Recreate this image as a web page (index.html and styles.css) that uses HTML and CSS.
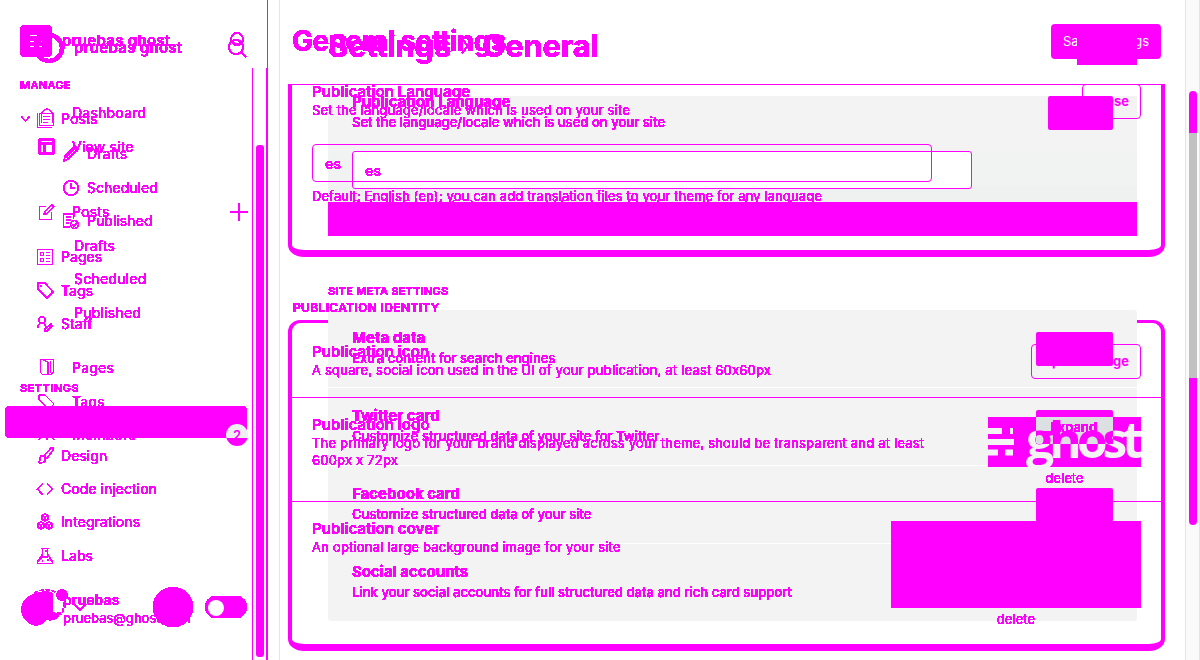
FILE: index.html
```
<!DOCTYPE html>
<html lang="en">
<head>
<meta charset="utf-8">
<title>General settings</title>
<link rel="stylesheet" href="styles.css">
</head>
<body>
<svg class="defs" width="0" height="0"><filter id="hard" x="0" y="0" width="100%" height="100%" color-interpolation-filters="sRGB"><feComponentTransfer><feFuncA type="discrete" tableValues="0 1 1 1 1 1 1 1 1"/></feComponentTransfer></filter></svg>
<div class="app">
 <aside class="sidebar stack">
  <!-- sidebar, grouped navigation -->
  <div class="ink side-a">
   <div class="brand"><span class="brand-icon"><svg width="32" height="32" viewBox="0 0 32 32"><path d="M10 10.500h7M10 16.500h4M19 16.500h3M10 21.500h7M19 21.500h3"/></svg></span><b>pruebas ghost</b><svg class="brand-search" width="20" height="20" viewBox="0 0 20 20"><circle cx="10" cy="8" r="6"/><path d="M5 11q5 4 10 0"/></svg></div>
   <div class="group manage">MANAGE</div>
   <div class="row"><svg class="chev" width="12" height="8" viewBox="0 0 12 8"><path d="M1.500 1.500 5.500 6 9.500 1.500"/></svg><svg class="ic thin" width="20" height="24" viewBox="0 0 20 24"><path d="M1.500 6v14.500h14M3.500 6.500h14v12h-14zM5.500 5v11M16.500 5v11M5.500 5.500l5.500-4 5.500 4M7 9.500h7M7 12.500h7M7 15.500h5"/></svg>Posts</div>
   <div class="row sub first"><svg class="ic" width="20" height="20" viewBox="0 0 20 20"><path d="m2 17 1-5L13 2l3 3L6 15zM4 13 13 4M4 12l3 3"/></svg>Drafts</div>
   <div class="row sub"><svg class="ic" width="20" height="20" viewBox="0 0 20 20"><circle cx="9" cy="10" r="7.300"/><path d="M9 5v5h4"/></svg>Scheduled</div>
   <div class="row sub"><svg class="ic" width="20" height="20" viewBox="0 0 20 20"><path d="M8 16H1.500V3h10v5M4 6h5M4 9h5M4 12h3"/><circle cx="12.500" cy="13.500" r="4"/><path d="m10.500 13.500 1.500 1.500 3-3"/></svg>Published</div>
   <div class="row gap"><svg class="ic thin" width="20" height="20" viewBox="0 0 20 20"><path d="M1.500 2.500h15v15h-15zM4.500 5.500h3v3h-3zM4.500 11.500h3v3h-3zM10 5.500h4M10 8.500h4M10 11.500h4M10 14.500h4"/></svg>Pages</div>
   <div class="row"><svg class="ic" width="20" height="20" viewBox="0 0 20 20"><path d="M2 2h7l8 9-6 6-9-9z"/><circle cx="5" cy="5" r=".5"/></svg>Tags</div>
   <div class="row staff"><svg class="ic" width="20" height="20" viewBox="0 0 20 20"><circle cx="6" cy="6" r="3.200"/><path d="M1.500 14q1-5 4.500-5 3 0 4 4M9 15l6-5 1 2-5 5H9z"/></svg>Staff</div>
   <div class="group settings">SETTINGS</div>
   <div class="active"></div>
   <div class="row low design"><svg class="ic" width="20" height="20" viewBox="0 0 20 20"><path d="M8 10 15 2h2v2l-6 8zM8 10q-4-1-4 3 0 3-2 3 5 2 7-1 1-2-1-5z"/></svg>Design</div>
   <div class="row low"><svg class="ic code" width="20" height="20" viewBox="0 0 20 20"><path d="m6.500 5-5 5 5 5M11.500 5l5 5-5 5"/></svg>Code injection</div>
   <div class="row low"><svg class="ic" width="20" height="20" viewBox="0 0 20 20"><path d="m9 2 3 1.500v4L9 9 6 7.500v-4zM5 10l3 1.500v4L5 17l-3-1.500v-4zM13 10l3 1.500v4L13 17l-3-1.500v-4zM6 4l3 1 3-1M9 5v3M2 12l3 1 3-1M5 13v4M10 12l3 1 3-1M13 13v4"/></svg>Integrations</div>
   <div class="row low"><svg class="ic" width="20" height="20" viewBox="0 0 20 20"><path d="M5 2.500h8M6.500 3v5L1.500 16v1.500h15V16l-5-8V3M9 5h2M4 13l2-2h6M6 15h1M11 14h2"/></svg>Labs</div>
   <div class="user">
    <svg class="avatar" width="50" height="44" viewBox="0 0 50 44"><path class="solid" d="M18 7c8-3 15-2 16 0v19q4 1 8 0-5 9-14 6-4 6-10 6A16 16 0 0 1 4 22Q5 10 18 7z"/><path d="M16 6Q32-2 44 10q4 9-1 18" stroke-dasharray="4 2"/><circle class="solid" cx="44" cy="8" r="5"/></svg>
    <div class="who"><b>pruebas</b><span>pruebas@ghost.com</span></div>
    <svg class="caret" width="14" height="10" viewBox="0 0 14 10"><path d="m1 2 6 6 6-6"/></svg>
    <span class="disc"></span><span class="toggle"></span>
   </div>
  </div>
  <!-- sidebar, flat navigation -->
  <div class="ink side-b">
   <div class="brand"><span class="ring"></span><b>pruebas ghost</b><svg class="brand-search" width="20" height="20" viewBox="0 0 20 20"><circle cx="9" cy="9" r="7"/><path d="m14 14 5 5"/></svg></div>
   <div class="row"><svg class="ic" width="20" height="20" viewBox="0 0 20 20"></svg>Dashboard</div>
   <div class="row"><svg class="ic site" width="20" height="20" viewBox="0 0 20 20"><path d="M2.500 2.500h14v14h-14zM2.500 6.500h14M7.500 6.500v10"/></svg>View site</div>
   <div class="row posts"><svg class="ic" width="20" height="20" viewBox="0 0 20 20"><path d="M9 4.500H2.500v13h12v-7M7 12.500l1-3 7-7 2 2-7 7z"/></svg>Posts<svg class="plus" width="18" height="18" viewBox="0 0 18 18"><path d="M9 0v18M0 9h18"/></svg></div>
   <div class="row child">Drafts</div><div class="row child">Scheduled</div><div class="row child">Published</div>
   <div class="row pages"><svg class="ic thin" width="20" height="20" viewBox="0 0 20 20"><path d="M3.500 1.500h13v13l-3 2h-8l-2-2zM6 2l5 2v12M13.500 3v12"/></svg>Pages</div>
   <div class="row"><svg class="ic thin" width="20" height="20" viewBox="0 0 20 20"><path d="M2 8V3h6l9 9-5 5z"/></svg>Tags</div>
   <div class="row"><svg class="ic" width="20" height="20" viewBox="0 0 20 20"><path d="M2 15q2-5 5-3 3 0 3 3M11 12q5-2 6 3"/></svg>Members</div>
  </div>
  <div class="marks">
   <div class="badge">2</div>
   <div class="knob"></div>
   <div class="rails"><i class="rail-bar"></i></div>
  </div>
 </aside>
 <main class="main stack">
  <div class="frames"><div class="frame one"></div><div class="frame two"></div></div>
  <div class="panels"><div class="panel one"><div class="tint"></div><div class="band"></div></div><div class="panel two"><i></i><i></i><i></i><i></i></div></div>
  <!-- expanded panels -->
  <div class="main-b">
   <h1 class="ink">Settings <svg width="12" height="22" viewBox="0 0 12 22"><path d="m3 4 6 7-6 7"/></svg> General</h1>
   <section class="item lang"><div class="ink copy"><h2>Publication Language</h2><p>Set the language/locale which is used on your site</p></div><span class="fill"></span></section>
   <div class="field"><span class="ink">es</span></div>
   <p class="ink help">Default: English (en); you can add translation files to your theme for any language</p>
   <div class="ink group">SITE META SETTINGS</div>
   <section class="item"><div class="ink copy"><h2>Meta data</h2><p>Extra content for search engines</p></div><span class="fill"></span></section>
   <section class="item"><div class="ink copy"><h2>Twitter card</h2><p>Customize structured data of your site for Twitter</p></div><span class="fill"></span></section>
   <section class="item"><div class="ink copy"><h2>Facebook card</h2><p>Customize structured data of your site</p></div><span class="fill"></span></section>
   <section class="item"><div class="ink copy"><h2>Social accounts</h2><p>Link your social accounts for full structured data and rich card support</p></div></section>
  </div>
  <!-- bordered cards -->
  <div class="main-a">
   <header><h1 class="ink">General settings</h1><div class="save"><span>Sa</span><span>gs</span></div></header>
   <div class="lang-head"><div class="ink copy"><h2>Publication Language</h2><p>Set the language/locale which is used on your site</p></div><div class="outline close">ose</div></div>
   <div class="field line"><span class="ink">es</span></div>
   <p class="ink help">Default: English (en); you can add translation files to your theme for any language</p>
   <div class="ink group">PUBLICATION IDENTITY</div>
   <section class="card icon"><div class="ink copy"><h2>Publication icon</h2><p>A square, social icon used in the UI of your publication, at least 60x60px</p></div><div class="outline upload"><span>p</span><span>ge</span></div></section>
   <section class="card logo"><div class="ink copy"><h2>Publication logo</h2><p>The primary logo for your brand displayed across your theme, should be transparent and at least 600px x 72px</p></div>
    <div class="media"><div class="ghost"><svg width="28" height="50" viewBox="0 0 28 50"><path d="M0 14h14M22 14h3M0 25h26M0 35.500h10M17 35.500h8"/></svg><span class="word">ghost</span><span class="ink expand">Expand</span></div><span class="ink del">delete</span></div></section>
   <section class="card cover"><div class="ink copy"><h2>Publication cover</h2><p>An optional large background image for your site</p></div><div class="media"><div class="image"></div><span class="ink del">delete</span></div></section>
  </div>
 </main>
 <div class="scroll"><i class="up"></i><i class="mid"></i><i class="down"></i></div>
</div>
</body>
</html>
```
FILE: styles.css
```
*{box-sizing:border-box;margin:0;padding:0}
body{font:400 14px/20px Inter,"Liberation Sans",sans-serif;font-feature-settings:"calt" 0;color:#f0f;background:#fff}
.defs{display:block;height:0}
.app{display:grid;grid-template-columns:280px 905px 15px;width:1200px;height:660px;overflow:hidden}
.stack{display:grid;height:660px;overflow:hidden}
.stack>*{grid-area:1/1;min-width:0}
.ink{filter:url(#hard)}
svg{flex:none;fill:none;stroke:#f0f;stroke-width:1.1}
svg .solid{fill:#f0f}
.thin{stroke-width:1}
h1{font-size:28px;line-height:36px;font-weight:700;white-space:nowrap}
h2{font-size:15px;line-height:20px;font-weight:600}

/* sidebar */
.sidebar{border-right:1px solid #e3e7ea}
.brand{display:flex;align-items:center;height:32px}
.brand b{font-size:15px;font-weight:600;letter-spacing:.28px}
.brand-search{margin-left:auto;stroke-width:1.3}
.group{font-size:11px;font-weight:600;line-height:14px;white-space:nowrap;letter-spacing:.25px}
.row{display:flex;align-items:center;height:34px;padding-left:36px;position:relative;letter-spacing:.06px}
.row .ic{margin-right:5px}
.side-a{padding-top:25px}
.side-a .brand{padding:0 32px 0 20px}
.brand-icon{width:32px;height:32px;border-radius:5px;background:#f0f;margin-right:10px}
.brand-icon svg{display:block;stroke:#fff;stroke-width:1}
.group.manage{margin:21px 0 10px 20px;letter-spacing:.35px}
.chev{position:absolute;left:20px}
.row.sub{padding-left:62px}
.row.first{margin-top:1px}
.row.sub:not(.first){height:33px}
.row.gap{margin-top:3px}
.row.staff{height:33px;margin-top:-1px}
.group.settings{margin:41px 0 11px 20px;letter-spacing:.5px}
.active{width:242px;height:32px;margin-left:5px;border-radius:5px;background:#f0f}
.row.low{height:33.3px}
.row.design{margin-top:1.2px}
.ic.code{stroke-width:1.4}
.user{display:flex;align-items:center;margin:15px 0 0 18px;height:44px;position:relative}
.avatar{margin-right:-5px}
.who{display:flex;flex-direction:column;line-height:18px}
.who b{font-size:14px;font-weight:600;letter-spacing:.1px}
.who span{font-size:13px}
.caret{position:absolute;left:55px;top:15px;stroke-width:1.5}
.disc{width:40px;height:40px;border-radius:50%;background:#f0f;position:absolute;left:135px;top:0}
.toggle{position:absolute;left:187px;top:9px;width:42px;height:22px;border-radius:11px;background:#f0f}
.side-b{padding-top:32px}
.side-b .brand{padding:0 32px 0 34px}
.ring{width:30px;height:30px;border:4px solid #f0f;border-radius:50%;margin-right:10px}
.side-b .row{height:33.4px;padding-left:37px;letter-spacing:.24px}
.side-b .row .ic{margin-right:15px}
.side-b .brand+.row{margin-top:32.6px}
.side-b .row.posts{margin-top:32px}
.side-b .row.child{padding-left:74px}
.side-b .row.child:nth-of-type(5){margin-top:.4px}
.side-b .row.pages{margin-top:22.3px}
.ic.site{stroke-width:1.4}
.row .plus{margin-left:auto;margin-right:31px;stroke-width:1.5}
.marks{position:relative}
.badge{position:absolute;left:226px;top:424px;width:22px;height:22px;border-radius:50%;background:linear-gradient(#edeff0 14px,#f0f 14px);text-align:center;line-height:22px;font-size:13px;font-weight:600}
.knob{position:absolute;left:208px;top:600px;width:16px;height:16px;border-radius:50%;background:#fff}
.rails{position:absolute;left:252px;top:0;width:16px;height:660px;padding:145px 0 3px 4px;background:linear-gradient(#f0f,#f0f) 0 68px/1px 592px no-repeat,linear-gradient(#f0f,#f0f) 14px 68px/1px 592px no-repeat,linear-gradient(#f0f,#f0f) 15px 0/1px 660px no-repeat}
.rail-bar{display:block;width:8px;height:100%;border-radius:3px;background:#f0f}

/* frames and panels */
.frames{padding:84px 20px 9px 8px;display:flex;flex-direction:column}
.frame{width:877px;border:solid #f0f;border-radius:14px}
.frame.one{height:173px;border-width:1px 4px 7px;border-radius:0 0 16px 16px/0 0 12px 12px}
.frame.two{height:331px;margin-top:63px;border-width:3px 4px 7px;border-radius:12px 12px 16px 16px/12px}
.panels{padding:96px 0 0 48px}
.panel{width:809px;background:#f3f3f3}
.panel.one{height:140px;padding-top:55px}
.tint{height:51px;background:linear-gradient(#f1f3f3 35px,#eff0f0 35px)}
.band{height:34px;background:#f0f}
.panel.two{height:311px;margin-top:74px;border-radius:3px;overflow:hidden}
.panel.two i{display:block;height:78px;border-bottom:1px solid #fff}
.panel.two i:last-child{border:0}

.main-b{padding:28px 48px 0}
.main-b h1{letter-spacing:-.25px;font-size:31px}
.main-b h1 svg{margin:0 4px 0 1px;stroke-width:1.5}
.item{height:78px;display:flex;justify-content:space-between;padding:18px 24px 0}
.item h2{font-weight:700}
.item p{font-size:13px;font-weight:500;white-space:nowrap;letter-spacing:.04px}
.item .fill{width:77px;height:34px;border-radius:2px;background:#f0f;margin-top:4px}
.item.lang{margin-top:32px;height:55px;padding-top:0}
.item.lang .copy{margin-top:-4px}
.item.lang .fill{width:65px;margin-top:0}
.main-b .field{width:620px;height:38px;margin-left:24px;padding:9px 12px;border:1px solid #f0f;border-radius:3px;background:#fff}
.field{font-weight:500;letter-spacing:.3px}
.field span{display:block}
.main-b .help{margin:6px 0 0 24px;font-size:13px;letter-spacing:-.08px}
.main-b .group{margin:69px 0 12px}

.main-a{padding-left:12px}
.main-a header{height:84px;display:flex;padding-top:23px;justify-content:space-between}
.main-a h1{letter-spacing:-.6px;font-size:28px}
.save{width:110px;height:35px;margin:1px 24px 0 0;padding:0 12px;border-radius:4px;background:#f0f;color:#fff;font-size:13px;line-height:35px;display:flex;justify-content:space-between;position:relative}
.save:after{content:"";position:absolute;left:26px;top:0;width:60px;height:41px;background:#f0f}
.lang-head{display:flex;justify-content:space-between;height:60px;padding:0 44px 0 20px}
.copy p{white-space:nowrap}
.main-a .copy{margin-top:-2px}
.main-a .copy h2{line-height:20px;letter-spacing:.08px}
.main-a .copy p{font-size:13px;line-height:17px;letter-spacing:.2px}
.outline{border:1px solid #f0f;border-radius:4px;height:35px;line-height:33px;font-size:13px;font-weight:700}
.close{width:59px;text-align:right;padding-right:11px}
.main-a .field{width:620px;height:38px;margin-left:20px;padding:9px 12px;border:1px solid #f0f;border-radius:4px}
.main-a .help{font-size:13px;margin:4px 0 0 20px;letter-spacing:.12px}
.main-a .group{font-size:12px;margin:95px 0 13px 1px;letter-spacing:.35px}
.card{display:flex;justify-content:space-between;width:869px;padding:0 20px;border-bottom:1px solid #f0f}
.card.icon{height:70px;padding-top:16px}
.main-a .icon .copy,.main-a .logo .copy,.main-a .cover .copy{margin-top:-2px}
.upload{width:110px;display:flex;justify-content:space-between;padding:0 11px 0 20px}
.card.logo{height:104px;padding-top:19px}
.card.cover{border:0;padding-top:19px}
.logo .copy{width:620px}
.logo .copy p{white-space:normal}
.media{display:flex;flex-direction:column;align-items:center}
.ghost{width:153px;height:50px;background:linear-gradient(#dde0e2,#dde0e2) 48px 0/77px 27px no-repeat #f0f;display:flex;position:relative;overflow:hidden}
.ghost svg{stroke:#f3f3f3;stroke-width:6}
.word{margin:-5px -10px 0 10px;padding-right:10px;height:55px;font:700 50px/54px "Open Sans",sans-serif;letter-spacing:-5.2px;color:transparent;background:linear-gradient(#f0f,#f0f) 10px 0/77px 32px no-repeat #f3f3f3;-webkit-background-clip:text;background-clip:text}
.expand{position:absolute;left:62px;top:0;font-size:13px;font-weight:600}
.del{font-size:13px;line-height:23px;letter-spacing:.1px}
.image{width:250px;height:87px;background:#f0f}

.scroll{border:solid #e4e4e4;border-width:0 1px;background:#fafafa;padding:91px 2px 0 3px}
.scroll i{display:block;width:8px;background:#f0f}
.up{height:42px}.mid{height:245px}.down{height:147px}
.scroll .up{border-radius:4px 4px 0 0}.scroll .mid{background:#c1c1c1}.scroll .down{border-radius:0 0 4px 4px}
```
